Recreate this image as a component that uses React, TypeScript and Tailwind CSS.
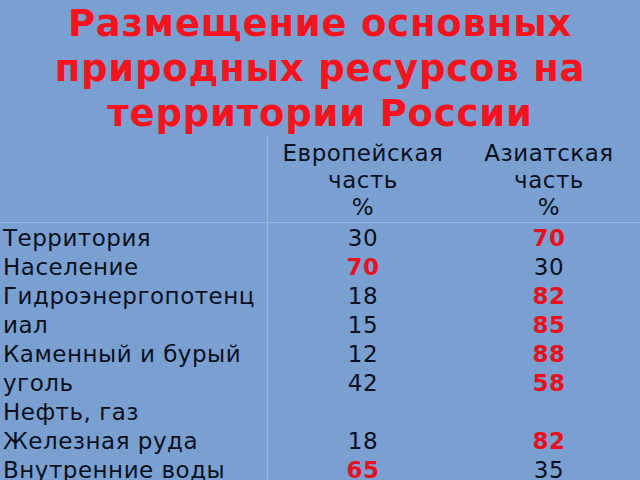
const rows: { label: string; eu?: string; asia?: string; euRed?: boolean; asiaRed?: boolean }[] = [
  { label: 'Территория', eu: '30', asia: '70', asiaRed: true },
  { label: 'Население', eu: '70', asia: '30', euRed: true },
  { label: 'Гидроэнергопотенц', eu: '18', asia: '82', asiaRed: true },
  { label: 'иал', eu: '15', asia: '85', asiaRed: true },
  { label: 'Каменный и бурый', eu: '12', asia: '88', asiaRed: true },
  { label: 'уголь', eu: '42', asia: '58', asiaRed: true },
  { label: 'Нефть, газ' },
  { label: 'Железная руда', eu: '18', asia: '82', asiaRed: true },
  { label: 'Внутренние воды', eu: '65', asia: '35', euRed: true },
]

function Num({ value, red }: { value?: string; red?: boolean }) {
  return (
    <div className={`text-center ${red ? 'font-bold text-[#e8101c]' : ''}`}>{value ?? '\u00a0'}</div>
  )
}

export default function App() {
  return (
    <div className="h-[480px] w-[640px] overflow-hidden bg-[#79a0d1] font-['DejaVu_Sans',sans-serif] text-[#0b1020]">
      <h1 className="pt-[1px] text-center text-[37px] font-bold leading-[45px] tracking-[0.8px] text-[#f5141e]">
        Размещение основных
        <br />
        природных ресурсов на
        <br />
        территории России
      </h1>

      <div className="grid grid-cols-[268px_190px_182px] text-[23px] leading-[29px] tracking-[0.5px]">
        <div className="border-r border-b border-[#93b5e0]" />
        <div className="border-b border-[#93b5e0] pt-[4px] pb-[1px] text-center leading-[27px]">
          Европейская
          <br />
          часть
          <br />%
        </div>
        <div className="border-b border-[#93b5e0] pt-[4px] pb-[1px] text-center leading-[27px]">
          Азиатская
          <br />
          часть
          <br />%
        </div>

        <div className="border-r border-[#93b5e0] pt-[1px] pl-[3px] whitespace-nowrap">
          {rows.map((r) => (
            <div key={r.label}>{r.label}</div>
          ))}
        </div>
        <div className="pt-[1px]">
          {rows.map((r) => (
            <Num key={r.label} value={r.eu} red={r.euRed} />
          ))}
        </div>
        <div className="pt-[1px]">
          {rows.map((r) => (
            <Num key={r.label} value={r.asia} red={r.asiaRed} />
          ))}
        </div>
      </div>
    </div>
  )
}
